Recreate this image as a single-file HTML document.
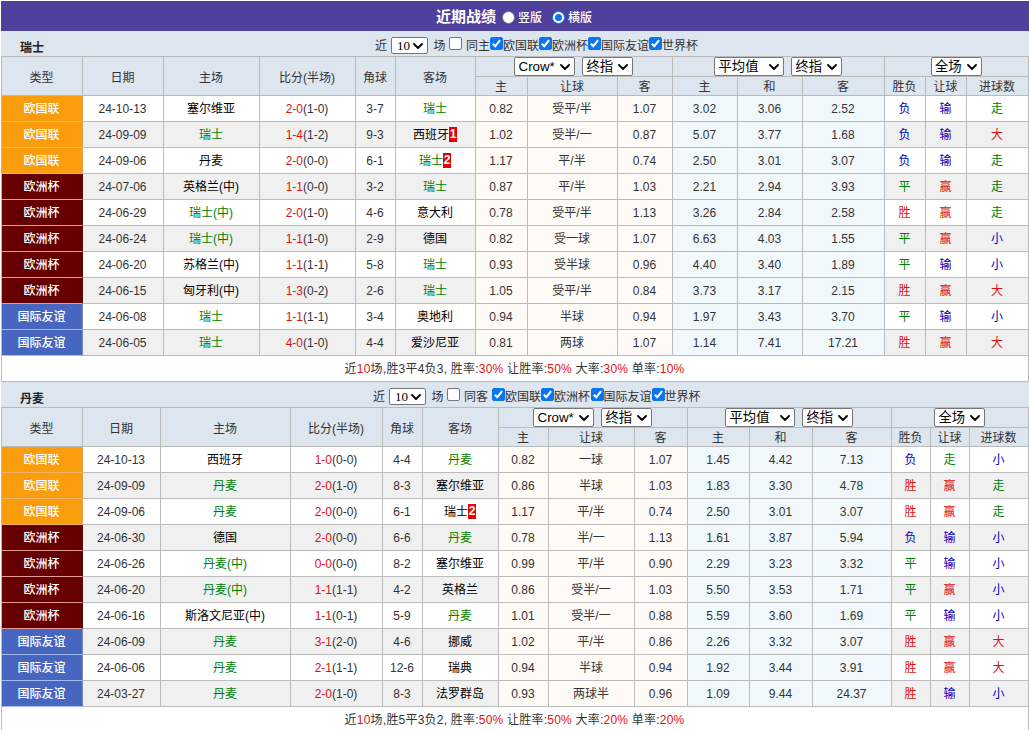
<!DOCTYPE html>
<html lang="zh-CN"><head><meta charset="utf-8"><title>近期战绩</title>
<style>
html,body{margin:0;padding:0;background:#fff;}
body{font-family:"Liberation Sans","Noto Sans CJK SC",sans-serif;font-size:12px;color:#333;width:1029px;height:730px;overflow:hidden;position:relative;}
.wrap{position:absolute;left:1px;top:1px;width:1028px;}
.title{height:30px;background:#4f409c;color:#fff;position:relative;}
.title .tt{position:absolute;left:435px;top:6px;font-size:15px;font-weight:bold;line-height:20px;}
.title .rd{position:absolute;top:10px;box-sizing:border-box;width:13px;height:13px;border:1px solid #767676;border-radius:50%;background:#fff;}
.title .rd:nth-of-type(2){left:501px;}
.title .rd.on{left:551px;border-color:#0a75f3;}
.title .rd.on::after{content:"";position:absolute;left:2px;top:2px;width:7px;height:7px;border-radius:50%;background:#0a75f3;}
.title .rl{position:absolute;top:8px;line-height:18px;font-size:12px;font-weight:500;}
.title .rl:nth-of-type(3){left:517px;}
.title .rl:nth-of-type(5){left:567px;}
.sec{height:25px;background:#dde5ef;position:relative;}
.sec .nm{position:absolute;left:19px;top:8px;font-weight:bold;line-height:18px;color:#222;}
.sec .ab{position:absolute;line-height:0;}
.sec .lb{top:6px;line-height:18px;white-space:nowrap;}
.sel{display:inline-block;box-sizing:border-box;height:19px;border:1px solid #767676;border-radius:2px;background:#fff;vertical-align:top;position:relative;text-align:left;color:#000;font-size:13.33px;line-height:17px;}
.sel.m{margin-left:7px;}
.sel .st{position:absolute;left:3.5px;top:0;}
.sel .arr{position:absolute;right:4px;top:6px;}
.sel.s10{height:17px;line-height:15px;}
.sel.s10 .st{font-family:"Liberation Serif","Noto Serif CJK SC",serif;font-size:13px;left:5px;}
.sel.s10 .arr{top:5px;}
.cb{display:inline-block;box-sizing:border-box;width:13px;height:13px;border:1px solid #767676;border-radius:2px;background:#fff;vertical-align:top;}
.cb.on{background:#0a75f3;border-color:#0a75f3;position:relative;}
.cb.on svg{position:absolute;left:-1px;top:-1px;}
table.tb{border-collapse:separate;border-spacing:0;table-layout:fixed;width:1028px;border-left:1px solid #bbb;border-top:1px solid #bbb;}
.tb th,.tb td{box-sizing:border-box;border-right:1px solid #bbb;border-bottom:1px solid #bbb;padding:0 1px 0 0;text-align:center;font-weight:normal;white-space:nowrap;overflow:hidden;}
.tb th{background:#dde5ef;color:#333;}
.tb tr.h1 th{height:39px;}
.tb tr.h1 th.hs{height:20px;line-height:0;vertical-align:top;font-size:0;padding:0 1px 0 0;}
.tb tr.h2 th{height:19px;line-height:16px;padding-top:2px;}
.tb td{height:26px;line-height:23px;padding-top:2px;}
.tb tr.r0 td{background:#fff;}
.tb tr.r1 td{background:#f0f0f0;}
.tb tr td.a{background:#fefaf6;}
.tb tr td.e{background:#f1f8fc;}
.tb tr td.tm{color:#000;}
.tb tr td.ty{color:#fff;font-weight:500;}
.tb tr td.t1{background:#f99d0d;border-right-color:#d9a24a;border-bottom-color:#f2b566;}
.tb tr td.t2{background:#660000;border-right-color:#5a0a0a;border-bottom-color:#e59a9a;}
.tb tr td.t3{background:#4766c0;border-right-color:#7a8cbb;border-bottom-color:#a3baf3;}
.tb tr.sum td{background:#fff;letter-spacing:0.22px;}
.r{color:#e01010;}
.g{color:#008000;}
.b{color:#0000c0;}
.card{display:inline-block;width:8px;height:15px;line-height:15px;background:#ee0000;color:#fff;font-weight:bold;vertical-align:middle;text-align:center;position:relative;top:-1px;}
</style></head>
<body>
<div class="wrap">
<div class="title"><span class="tt">近期战绩</span><span class="rd"></span><span class="rl">竖版</span><span class="rd on"></span><span class="rl">横版</span></div>
<div class="sec"><span class="nm">瑞士</span><span class="ab lb" style="left:374px">近</span><span class="ab" style="left:390px;top:6px"><span class="sel s10" style="width:37px"><span class="st">10</span><svg class="arr" width="10" height="6" viewBox="0 0 10 6"><path d="M1 1 L5 5 L9 1" fill="none" stroke="#000" stroke-width="1.8" stroke-linecap="round" stroke-linejoin="round"/></svg></span></span><span class="ab lb" style="left:432.5px">场</span><span class="ab" style="left:448px;top:6px"><span class="cb"></span></span><span class="ab lb" style="left:465px">同主</span><span class="ab" style="left:489px;top:6px"><span class="cb on"><svg width="13" height="13" viewBox="0 0 13 13"><path d="M2.8 6.7 L5.3 9.2 L10.1 3.2" fill="none" stroke="#fff" stroke-width="2.1" stroke-linecap="butt" stroke-linejoin="miter"/></svg></span></span><span class="ab lb" style="left:502px">欧国联</span><span class="ab" style="left:538px;top:6px"><span class="cb on"><svg width="13" height="13" viewBox="0 0 13 13"><path d="M2.8 6.7 L5.3 9.2 L10.1 3.2" fill="none" stroke="#fff" stroke-width="2.1" stroke-linecap="butt" stroke-linejoin="miter"/></svg></span></span><span class="ab lb" style="left:551px">欧洲杯</span><span class="ab" style="left:587px;top:6px"><span class="cb on"><svg width="13" height="13" viewBox="0 0 13 13"><path d="M2.8 6.7 L5.3 9.2 L10.1 3.2" fill="none" stroke="#fff" stroke-width="2.1" stroke-linecap="butt" stroke-linejoin="miter"/></svg></span></span><span class="ab lb" style="left:600px">国际友谊</span><span class="ab" style="left:648px;top:6px"><span class="cb on"><svg width="13" height="13" viewBox="0 0 13 13"><path d="M2.8 6.7 L5.3 9.2 L10.1 3.2" fill="none" stroke="#fff" stroke-width="2.1" stroke-linecap="butt" stroke-linejoin="miter"/></svg></span></span><span class="ab lb" style="left:661px">世界杯</span></div>
<table class="tb"><colgroup><col style="width:81px"><col style="width:81px"><col style="width:96px"><col style="width:96px"><col style="width:40px"><col style="width:80px"><col style="width:52px"><col style="width:90px"><col style="width:55px"><col style="width:65px"><col style="width:65px"><col style="width:82px"><col style="width:41px"><col style="width:41px"><col style="width:62px"></colgroup>
<tr class="h1"><th rowspan="2">类型</th><th rowspan="2">日期</th><th rowspan="2">主场</th><th rowspan="2">比分(半场)</th><th rowspan="2">角球</th><th rowspan="2">客场</th><th colspan="3" class="hs"><span class="sel " style="width:61px"><span class="st">Crow*</span><svg class="arr" width="10" height="6" viewBox="0 0 10 6"><path d="M1 1 L5 5 L9 1" fill="none" stroke="#000" stroke-width="1.8" stroke-linecap="round" stroke-linejoin="round"/></svg></span><span class="sel m" style="width:51px"><span class="st">终指</span><svg class="arr" width="10" height="6" viewBox="0 0 10 6"><path d="M1 1 L5 5 L9 1" fill="none" stroke="#000" stroke-width="1.8" stroke-linecap="round" stroke-linejoin="round"/></svg></span></th><th colspan="3" class="hs"><span class="sel wide" style="width:70px"><span class="st">平均值</span><svg class="arr" width="10" height="6" viewBox="0 0 10 6"><path d="M1 1 L5 5 L9 1" fill="none" stroke="#000" stroke-width="1.8" stroke-linecap="round" stroke-linejoin="round"/></svg></span><span class="sel m" style="width:51px"><span class="st">终指</span><svg class="arr" width="10" height="6" viewBox="0 0 10 6"><path d="M1 1 L5 5 L9 1" fill="none" stroke="#000" stroke-width="1.8" stroke-linecap="round" stroke-linejoin="round"/></svg></span></th><th colspan="3" class="hs"><span class="sel " style="width:51px"><span class="st">全场</span><svg class="arr" width="10" height="6" viewBox="0 0 10 6"><path d="M1 1 L5 5 L9 1" fill="none" stroke="#000" stroke-width="1.8" stroke-linecap="round" stroke-linejoin="round"/></svg></span></th></tr>
<tr class="h2"><th>主</th><th>让球</th><th>客</th><th>主</th><th>和</th><th>客</th><th>胜负</th><th>让球</th><th>进球数</th></tr>
<tr class="r0"><td class="ty t1">欧国联</td><td>24-10-13</td><td class="tm">塞尔维亚</td><td><span class="r">2-0</span>(1-0)</td><td>3-7</td><td class="tm"><span class="g">瑞士</span></td><td class="a">0.82</td><td class="a">受平/半</td><td class="a">1.07</td><td class="e">3.02</td><td class="e">3.06</td><td class="e">2.52</td><td><span class="b">负</span></td><td><span class="b">输</span></td><td><span class="g">走</span></td></tr>
<tr class="r1"><td class="ty t1">欧国联</td><td>24-09-09</td><td class="tm"><span class="g">瑞士</span></td><td><span class="r">1-4</span>(1-2)</td><td>9-3</td><td class="tm">西班牙<b class="card">1</b></td><td class="a">1.02</td><td class="a">受半/一</td><td class="a">0.87</td><td class="e">5.07</td><td class="e">3.77</td><td class="e">1.68</td><td><span class="b">负</span></td><td><span class="b">输</span></td><td><span class="r">大</span></td></tr>
<tr class="r0"><td class="ty t1">欧国联</td><td>24-09-06</td><td class="tm">丹麦</td><td><span class="r">2-0</span>(0-0)</td><td>6-1</td><td class="tm"><span class="g">瑞士</span><b class="card">2</b></td><td class="a">1.17</td><td class="a">平/半</td><td class="a">0.74</td><td class="e">2.50</td><td class="e">3.01</td><td class="e">3.07</td><td><span class="b">负</span></td><td><span class="b">输</span></td><td><span class="g">走</span></td></tr>
<tr class="r1"><td class="ty t2">欧洲杯</td><td>24-07-06</td><td class="tm">英格兰(中)</td><td><span class="r">1-1</span>(0-0)</td><td>3-2</td><td class="tm"><span class="g">瑞士</span></td><td class="a">0.87</td><td class="a">平/半</td><td class="a">1.03</td><td class="e">2.21</td><td class="e">2.94</td><td class="e">3.93</td><td><span class="g">平</span></td><td><span class="r">赢</span></td><td><span class="g">走</span></td></tr>
<tr class="r0"><td class="ty t2">欧洲杯</td><td>24-06-29</td><td class="tm"><span class="g">瑞士(中)</span></td><td><span class="r">2-0</span>(1-0)</td><td>4-6</td><td class="tm">意大利</td><td class="a">0.78</td><td class="a">受平/半</td><td class="a">1.13</td><td class="e">3.26</td><td class="e">2.84</td><td class="e">2.58</td><td><span class="r">胜</span></td><td><span class="r">赢</span></td><td><span class="g">走</span></td></tr>
<tr class="r1"><td class="ty t2">欧洲杯</td><td>24-06-24</td><td class="tm"><span class="g">瑞士(中)</span></td><td><span class="r">1-1</span>(1-0)</td><td>2-9</td><td class="tm">德国</td><td class="a">0.82</td><td class="a">受一球</td><td class="a">1.07</td><td class="e">6.63</td><td class="e">4.03</td><td class="e">1.55</td><td><span class="g">平</span></td><td><span class="r">赢</span></td><td><span class="b">小</span></td></tr>
<tr class="r0"><td class="ty t2">欧洲杯</td><td>24-06-20</td><td class="tm">苏格兰(中)</td><td><span class="r">1-1</span>(1-1)</td><td>5-8</td><td class="tm"><span class="g">瑞士</span></td><td class="a">0.93</td><td class="a">受半球</td><td class="a">0.96</td><td class="e">4.40</td><td class="e">3.40</td><td class="e">1.89</td><td><span class="g">平</span></td><td><span class="b">输</span></td><td><span class="b">小</span></td></tr>
<tr class="r1"><td class="ty t2">欧洲杯</td><td>24-06-15</td><td class="tm">匈牙利(中)</td><td><span class="r">1-3</span>(0-2)</td><td>2-6</td><td class="tm"><span class="g">瑞士</span></td><td class="a">1.05</td><td class="a">受平/半</td><td class="a">0.84</td><td class="e">3.73</td><td class="e">3.17</td><td class="e">2.15</td><td><span class="r">胜</span></td><td><span class="r">赢</span></td><td><span class="r">大</span></td></tr>
<tr class="r0"><td class="ty t3">国际友谊</td><td>24-06-08</td><td class="tm"><span class="g">瑞士</span></td><td><span class="r">1-1</span>(1-1)</td><td>3-4</td><td class="tm">奥地利</td><td class="a">0.94</td><td class="a">半球</td><td class="a">0.94</td><td class="e">1.97</td><td class="e">3.43</td><td class="e">3.70</td><td><span class="g">平</span></td><td><span class="b">输</span></td><td><span class="b">小</span></td></tr>
<tr class="r1"><td class="ty t3">国际友谊</td><td>24-06-05</td><td class="tm"><span class="g">瑞士</span></td><td><span class="r">4-0</span>(1-0)</td><td>4-4</td><td class="tm">爱沙尼亚</td><td class="a">0.81</td><td class="a">两球</td><td class="a">1.07</td><td class="e">1.14</td><td class="e">7.41</td><td class="e">17.21</td><td><span class="r">胜</span></td><td><span class="r">赢</span></td><td><span class="r">大</span></td></tr>
<tr class="sum"><td colspan="15">近<span class="r">10</span>场,胜3平4负3, 胜率:<span class="r">30%</span> 让胜率:<span class="r">50%</span> 大率:<span class="r">30%</span> 单率:<span class="r">10%</span></td></tr>
</table>
<div class="sec"><span class="nm">丹麦</span><span class="ab lb" style="left:372px">近</span><span class="ab" style="left:388px;top:6px"><span class="sel s10" style="width:37px"><span class="st">10</span><svg class="arr" width="10" height="6" viewBox="0 0 10 6"><path d="M1 1 L5 5 L9 1" fill="none" stroke="#000" stroke-width="1.8" stroke-linecap="round" stroke-linejoin="round"/></svg></span></span><span class="ab lb" style="left:430.5px">场</span><span class="ab" style="left:446px;top:6px"><span class="cb"></span></span><span class="ab lb" style="left:463px">同客</span><span class="ab" style="left:491px;top:6px"><span class="cb on"><svg width="13" height="13" viewBox="0 0 13 13"><path d="M2.8 6.7 L5.3 9.2 L10.1 3.2" fill="none" stroke="#fff" stroke-width="2.1" stroke-linecap="butt" stroke-linejoin="miter"/></svg></span></span><span class="ab lb" style="left:504px">欧国联</span><span class="ab" style="left:540px;top:6px"><span class="cb on"><svg width="13" height="13" viewBox="0 0 13 13"><path d="M2.8 6.7 L5.3 9.2 L10.1 3.2" fill="none" stroke="#fff" stroke-width="2.1" stroke-linecap="butt" stroke-linejoin="miter"/></svg></span></span><span class="ab lb" style="left:553px">欧洲杯</span><span class="ab" style="left:589.5px;top:6px"><span class="cb on"><svg width="13" height="13" viewBox="0 0 13 13"><path d="M2.8 6.7 L5.3 9.2 L10.1 3.2" fill="none" stroke="#fff" stroke-width="2.1" stroke-linecap="butt" stroke-linejoin="miter"/></svg></span></span><span class="ab lb" style="left:602.5px">国际友谊</span><span class="ab" style="left:650.5px;top:6px"><span class="cb on"><svg width="13" height="13" viewBox="0 0 13 13"><path d="M2.8 6.7 L5.3 9.2 L10.1 3.2" fill="none" stroke="#fff" stroke-width="2.1" stroke-linecap="butt" stroke-linejoin="miter"/></svg></span></span><span class="ab lb" style="left:663.5px">世界杯</span></div>
<table class="tb"><colgroup><col style="width:81px"><col style="width:78px"><col style="width:130px"><col style="width:92px"><col style="width:40px"><col style="width:76px"><col style="width:50px"><col style="width:86px"><col style="width:53px"><col style="width:62px"><col style="width:63px"><col style="width:79px"><col style="width:39px"><col style="width:39px"><col style="width:59px"></colgroup>
<tr class="h1"><th rowspan="2">类型</th><th rowspan="2">日期</th><th rowspan="2">主场</th><th rowspan="2">比分(半场)</th><th rowspan="2">角球</th><th rowspan="2">客场</th><th colspan="3" class="hs"><span class="sel " style="width:61px"><span class="st">Crow*</span><svg class="arr" width="10" height="6" viewBox="0 0 10 6"><path d="M1 1 L5 5 L9 1" fill="none" stroke="#000" stroke-width="1.8" stroke-linecap="round" stroke-linejoin="round"/></svg></span><span class="sel m" style="width:51px"><span class="st">终指</span><svg class="arr" width="10" height="6" viewBox="0 0 10 6"><path d="M1 1 L5 5 L9 1" fill="none" stroke="#000" stroke-width="1.8" stroke-linecap="round" stroke-linejoin="round"/></svg></span></th><th colspan="3" class="hs"><span class="sel wide" style="width:70px"><span class="st">平均值</span><svg class="arr" width="10" height="6" viewBox="0 0 10 6"><path d="M1 1 L5 5 L9 1" fill="none" stroke="#000" stroke-width="1.8" stroke-linecap="round" stroke-linejoin="round"/></svg></span><span class="sel m" style="width:51px"><span class="st">终指</span><svg class="arr" width="10" height="6" viewBox="0 0 10 6"><path d="M1 1 L5 5 L9 1" fill="none" stroke="#000" stroke-width="1.8" stroke-linecap="round" stroke-linejoin="round"/></svg></span></th><th colspan="3" class="hs"><span class="sel " style="width:51px"><span class="st">全场</span><svg class="arr" width="10" height="6" viewBox="0 0 10 6"><path d="M1 1 L5 5 L9 1" fill="none" stroke="#000" stroke-width="1.8" stroke-linecap="round" stroke-linejoin="round"/></svg></span></th></tr>
<tr class="h2"><th>主</th><th>让球</th><th>客</th><th>主</th><th>和</th><th>客</th><th>胜负</th><th>让球</th><th>进球数</th></tr>
<tr class="r0"><td class="ty t1">欧国联</td><td>24-10-13</td><td class="tm">西班牙</td><td><span class="r">1-0</span>(0-0)</td><td>4-4</td><td class="tm"><span class="g">丹麦</span></td><td class="a">0.82</td><td class="a">一球</td><td class="a">1.07</td><td class="e">1.45</td><td class="e">4.42</td><td class="e">7.13</td><td><span class="b">负</span></td><td><span class="g">走</span></td><td><span class="b">小</span></td></tr>
<tr class="r1"><td class="ty t1">欧国联</td><td>24-09-09</td><td class="tm"><span class="g">丹麦</span></td><td><span class="r">2-0</span>(1-0)</td><td>8-3</td><td class="tm">塞尔维亚</td><td class="a">0.86</td><td class="a">半球</td><td class="a">1.03</td><td class="e">1.83</td><td class="e">3.30</td><td class="e">4.78</td><td><span class="r">胜</span></td><td><span class="r">赢</span></td><td><span class="g">走</span></td></tr>
<tr class="r0"><td class="ty t1">欧国联</td><td>24-09-06</td><td class="tm"><span class="g">丹麦</span></td><td><span class="r">2-0</span>(0-0)</td><td>6-1</td><td class="tm">瑞士<b class="card">2</b></td><td class="a">1.17</td><td class="a">平/半</td><td class="a">0.74</td><td class="e">2.50</td><td class="e">3.01</td><td class="e">3.07</td><td><span class="r">胜</span></td><td><span class="r">赢</span></td><td><span class="g">走</span></td></tr>
<tr class="r1"><td class="ty t2">欧洲杯</td><td>24-06-30</td><td class="tm">德国</td><td><span class="r">2-0</span>(0-0)</td><td>6-6</td><td class="tm"><span class="g">丹麦</span></td><td class="a">0.78</td><td class="a">半/一</td><td class="a">1.13</td><td class="e">1.61</td><td class="e">3.87</td><td class="e">5.94</td><td><span class="b">负</span></td><td><span class="b">输</span></td><td><span class="b">小</span></td></tr>
<tr class="r0"><td class="ty t2">欧洲杯</td><td>24-06-26</td><td class="tm"><span class="g">丹麦(中)</span></td><td><span class="r">0-0</span>(0-0)</td><td>8-2</td><td class="tm">塞尔维亚</td><td class="a">0.99</td><td class="a">平/半</td><td class="a">0.90</td><td class="e">2.29</td><td class="e">3.23</td><td class="e">3.32</td><td><span class="g">平</span></td><td><span class="b">输</span></td><td><span class="b">小</span></td></tr>
<tr class="r1"><td class="ty t2">欧洲杯</td><td>24-06-20</td><td class="tm"><span class="g">丹麦(中)</span></td><td><span class="r">1-1</span>(1-1)</td><td>4-2</td><td class="tm">英格兰</td><td class="a">0.86</td><td class="a">受半/一</td><td class="a">1.03</td><td class="e">5.50</td><td class="e">3.53</td><td class="e">1.71</td><td><span class="g">平</span></td><td><span class="r">赢</span></td><td><span class="b">小</span></td></tr>
<tr class="r0"><td class="ty t2">欧洲杯</td><td>24-06-16</td><td class="tm">斯洛文尼亚(中)</td><td><span class="r">1-1</span>(0-1)</td><td>5-9</td><td class="tm"><span class="g">丹麦</span></td><td class="a">1.01</td><td class="a">受半/一</td><td class="a">0.88</td><td class="e">5.59</td><td class="e">3.60</td><td class="e">1.69</td><td><span class="g">平</span></td><td><span class="b">输</span></td><td><span class="b">小</span></td></tr>
<tr class="r1"><td class="ty t3">国际友谊</td><td>24-06-09</td><td class="tm"><span class="g">丹麦</span></td><td><span class="r">3-1</span>(2-0)</td><td>4-6</td><td class="tm">挪威</td><td class="a">1.02</td><td class="a">平/半</td><td class="a">0.86</td><td class="e">2.26</td><td class="e">3.32</td><td class="e">3.07</td><td><span class="r">胜</span></td><td><span class="r">赢</span></td><td><span class="r">大</span></td></tr>
<tr class="r0"><td class="ty t3">国际友谊</td><td>24-06-06</td><td class="tm"><span class="g">丹麦</span></td><td><span class="r">2-1</span>(1-1)</td><td>12-6</td><td class="tm">瑞典</td><td class="a">0.94</td><td class="a">半球</td><td class="a">0.94</td><td class="e">1.92</td><td class="e">3.44</td><td class="e">3.91</td><td><span class="r">胜</span></td><td><span class="r">赢</span></td><td><span class="r">大</span></td></tr>
<tr class="r1"><td class="ty t3">国际友谊</td><td>24-03-27</td><td class="tm"><span class="g">丹麦</span></td><td><span class="r">2-0</span>(1-0)</td><td>8-3</td><td class="tm">法罗群岛</td><td class="a">0.93</td><td class="a">两球半</td><td class="a">0.96</td><td class="e">1.09</td><td class="e">9.44</td><td class="e">24.37</td><td><span class="r">胜</span></td><td><span class="b">输</span></td><td><span class="b">小</span></td></tr>
<tr class="sum"><td colspan="15">近<span class="r">10</span>场,胜5平3负2, 胜率:<span class="r">50%</span> 让胜率:<span class="r">50%</span> 大率:<span class="r">20%</span> 单率:<span class="r">20%</span></td></tr>
</table>
</div>
</body></html>
